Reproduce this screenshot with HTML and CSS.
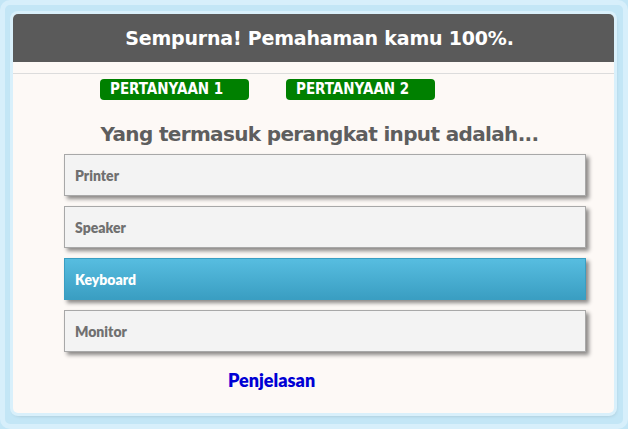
FILE: index.html
```html
<!DOCTYPE html>
<html>
<head>
<meta charset="utf-8">
<link rel="stylesheet" href="styles.css">
</head>
<body>
<div class="frame">
  <div class="card">
    <div class="header">Sempurna! Pemahaman kamu 100%.</div>
    <div class="divider"></div>
    <div class="tabs">
      <span class="tab">PERTANYAAN 1</span>
      <span class="tab">PERTANYAAN 2</span>
    </div>
    <div class="question">Yang termasuk perangkat input adalah...</div>
    <div class="options">
      <div class="option">Printer</div>
      <div class="option">Speaker</div>
      <div class="option selected">Keyboard</div>
      <div class="option">Monitor</div>
    </div>
    <div class="explain">Penjelasan</div>
  </div>
</div>
</body>
</html>
```
FILE: styles.css
```css
html, body {
  margin: 0;
  padding: 0;
}
body {
  width: 628px;
  height: 429px;
  background: #c3e6f6;
  font-family: "Lato", "DejaVu Sans", sans-serif;
  overflow: hidden;
}
.frame {
  height: 429px;
  box-sizing: border-box;
  padding: 14px 14px 16px 13px;
  border-radius: 10px;
  box-shadow: inset 0 0 0 5px #d7effb;
}
.card {
  height: 399px;
  background: #fdf9f6;
  border-radius: 5px;
  overflow: hidden;
  box-shadow: 0 0 0 3px #d9f0fb, 1px 2px 4px rgba(0,0,0,0.25);
  display: flex;
  flex-direction: column;
}
.header {
  height: 48px;
  background: #5a5a5a;
  color: #fff;
  font-family: "DejaVu Sans", sans-serif;
  font-weight: bold;
  font-size: 19px;
  letter-spacing: -0.2px;
  display: flex;
  align-items: center;
  justify-content: center;
  padding-left: 12px;
}
.divider {
  margin-top: 11px;
  border-top: 1px solid #dcdcdc;
}
.tabs {
  display: flex;
  gap: 37px;
  margin-top: 5px;
  padding-left: 87px;
}
.tab {
  width: 149px;
  height: 21px;
  box-sizing: border-box;
  background: #008000;
  color: #fff;
  border-radius: 4px;
  font-family: "DejaVu Sans Condensed", "DejaVu Sans", sans-serif;
  font-stretch: condensed;
  font-weight: bold;
  font-size: 15px;
  line-height: 21px;
  padding-left: 10px;
}
.question {
  margin-top: 22px;
  text-align: center;
  color: #5e5e5e;
  font-family: "DejaVu Sans", sans-serif;
  font-weight: bold;
  font-size: 20px;
  letter-spacing: -0.65px;
  line-height: 24px;
  padding-left: 12px;
}
.options {
  display: flex;
  flex-direction: column;
  gap: 10px;
  margin: 8px 28px 0 51px;
}
.option {
  height: 42px;
  box-sizing: border-box;
  background: #f3f3f3;
  border: 1px solid #a8a8a8;
  box-shadow: 3px 3px 4px rgba(0,0,0,0.45);
  color: #707070;
  font-weight: 800;
  font-size: 14px;
  display: flex;
  align-items: center;
  padding-left: 10px;
}
.option.selected {
  background: linear-gradient(#57bde0, #3a9ec2);
  border-color: #3a9ec2;
  color: #fff;
}
.explain {
  margin-top: 17px;
  padding-left: 215px;
  color: #0000d4;
  font-weight: 800;
  font-size: 18px;
}
```
